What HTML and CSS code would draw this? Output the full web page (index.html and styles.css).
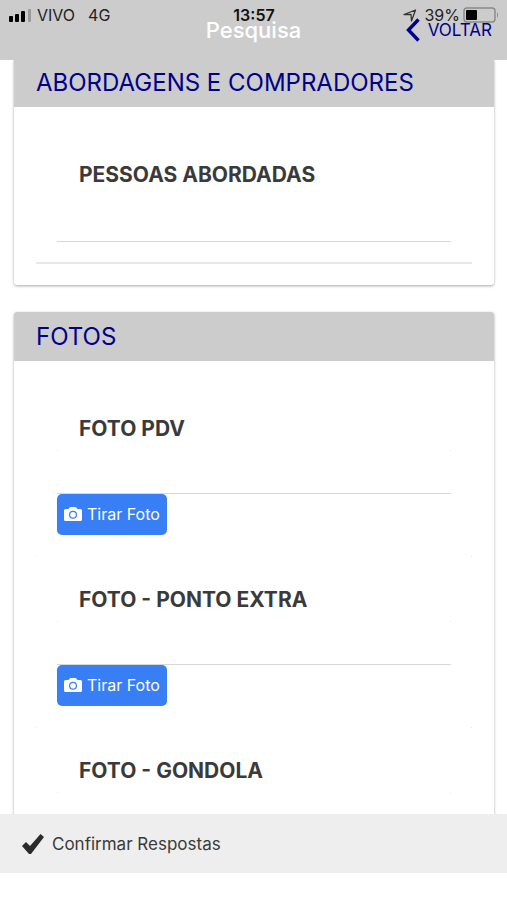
FILE: index.html
```html
<!DOCTYPE html>
<html lang="pt-BR">
<head>
  <meta charset="utf-8">
  <meta name="viewport" content="width=device-width, initial-scale=1">
  <title>Pesquisa</title>
  <link rel="stylesheet" href="styles.css">
</head>
<body>

  <!-- Header, the status bar lies over it -->
  <header class="header">
    <div class="status">
      <div class="status-left">
        <svg class="signal" viewBox="0 0 23 13" aria-hidden="true">
          <rect x="0" y="7" width="4" height="6" rx="1"/>
          <rect x="6" y="5" width="4" height="8" rx="1"/>
          <rect x="12" y="2" width="4" height="11" rx="1"/>
          <rect x="19" y="0" width="3" height="13" rx="1" fill="#999"/>
        </svg>
        <span>VIVO</span>
        <span class="network">4G</span>
      </div>
      <strong class="clock">13:57</strong>
      <div class="status-right">
        <svg class="location" viewBox="0 0 14 13" aria-hidden="true">
          <path d="M1 5.5 L12.5 1 L8.5 12 L8 5.5 Z" fill="none" stroke="#333" stroke-width="1.3" stroke-linejoin="round"/>
        </svg>
        <span class="charge">39%</span>
        <svg class="battery" viewBox="0 0 36 16" aria-hidden="true">
          <rect x="1" y="1" width="31" height="14" rx="3" fill="none" stroke="#888" stroke-width="1.4"/>
          <rect x="3" y="3" width="11" height="10" rx="1"/>
          <path d="M34 5 Q36 8 34 11 Z" fill="#888"/>
        </svg>
      </div>
    </div>
    <h1 class="title">Pesquisa</h1>
    <a class="back" href="#">
      <svg class="back-icon" viewBox="0 0 14 24" aria-hidden="true">
        <path d="M12.5 1.5 L2.5 12 L12.5 22.5" fill="none" stroke="#00008b" stroke-width="3.4"/>
      </svg>
      VOLTAR
    </a>
  </header>

  <main class="content">
    <section class="card">
      <h2 class="card-header">ABORDAGENS E COMPRADORES</h2>
      <div class="card-body">
        <div class="item item-line">
          <label for="pessoas">PESSOAS ABORDADAS</label>
          <input class="field field-tall" type="text" id="pessoas">
        </div>
      </div>
    </section>

    <section class="card">
      <h2 class="card-header">FOTOS</h2>
      <div class="card-body">
        <div class="item item-photo">
          <label for="fotoPdv">FOTO PDV</label>
          <input class="field field-photo" type="text" id="fotoPdv">
          <button class="photo" type="button">
            <svg class="camera" viewBox="0 0 18 14" aria-hidden="true">
              <path fill="#fff" d="M1.5 2H4.5L5.6 .5Q6 0 6.6 0H11.4Q12 0 12.4 .5L13.5 2H16.5Q18 2 18 3.5V12.5Q18 14 16.5 14H1.5Q0 14 0 12.5V3.5Q0 2 1.5 2Z"/>
              <circle cx="9" cy="7.8" r="3.4" fill="none" stroke="#387ef5" stroke-width="1.2"/>
            </svg>
            Tirar Foto
          </button>
        </div>
        <div class="item item-photo">
          <label for="fotoExtra">FOTO - PONTO EXTRA</label>
          <input class="field field-photo" type="text" id="fotoExtra">
          <button class="photo" type="button">
            <svg class="camera" viewBox="0 0 18 14" aria-hidden="true">
              <path fill="#fff" d="M1.5 2H4.5L5.6 .5Q6 0 6.6 0H11.4Q12 0 12.4 .5L13.5 2H16.5Q18 2 18 3.5V12.5Q18 14 16.5 14H1.5Q0 14 0 12.5V3.5Q0 2 1.5 2Z"/>
              <circle cx="9" cy="7.8" r="3.4" fill="none" stroke="#387ef5" stroke-width="1.2"/>
            </svg>
            Tirar Foto
          </button>
        </div>
        <div class="item item-photo">
          <label for="fotoGondola">FOTO - GONDOLA</label>
          <input class="field field-photo" type="text" id="fotoGondola">
        </div>
      </div>
    </section>
  </main>

  <footer class="footer">
    <button class="confirm" type="button">
      <svg class="check" viewBox="0 0 22 20" aria-hidden="true">
        <path d="M0 12 L4 8 L8 12 L18.5 0 L22 3 L9 20 L7 20 Z" fill="#2b2b2b"/>
      </svg>
      Confirmar Respostas
    </button>
  </footer>

</body>
</html>
```
FILE: styles.css
```css
* {
  box-sizing: border-box;
}
body {
  margin: 0;
  height: 100vh;
  padding-bottom: 27px;
  display: flex;
  flex-direction: column;
  font-family: Inter, "Liberation Sans", sans-serif;
  color: #3a3a3a;
  background: #fff;
}
button {
  border: 0;
  font-family: inherit;
  cursor: pointer;
}

/* header */
.header {
  position: relative;
  flex: none;
  display: grid;
  grid-template-columns: 1fr auto 1fr;
  align-items: center;
  height: 60px;
  padding: 0 15px;
  background: #ccc;
}
.status {
  position: absolute;
  top: 5px;
  left: 0;
  right: 0;
  display: grid;
  grid-template-columns: 1fr auto 1fr;
  padding: 0 8px 0 9px;
  font-size: 16px;
  line-height: 20px;
  color: #222;
}
.status-left,
.status-right {
  display: flex;
  align-items: center;
  gap: 5px;
}
.status-right {
  justify-content: flex-end;
  gap: 3px;
}
.signal {
  width: 23px;
  height: 13px;
}
.network {
  margin-left: 8px;
}
.clock {
  font-weight: 600;
  color: #111;
}
.charge {
  margin-left: 4px;
}
.location {
  width: 14px;
  height: 13px;
}
.battery {
  width: 36px;
  height: 16px;
}
.title {
  grid-column: 2;
  margin: 0;
  font-size: 22px;
  line-height: 60px;
  font-weight: 500;
  color: #fff;
}
.back {
  justify-self: end;
  display: flex;
  align-items: center;
  gap: 8px;
  font-size: 17px;
  line-height: 24px;
  color: #00008b;
  text-decoration: none;
}
.back-icon {
  width: 14px;
  height: 24px;
}

/* cards */
.content {
  flex: 1;
  min-height: 0;
  overflow: hidden;
  padding: 0 13px 0 14px;
}
.card {
  margin-bottom: 27px;
  border-radius: 3px;
  box-shadow: 0 1px 3px rgba(0, 0, 0, 0.35);
}
.card-header {
  margin: 0;
  padding: 0 22px;
  border-radius: 3px 3px 0 0;
  font-size: 24px;
  line-height: 49px;
  font-weight: 400;
  color: #00008b;
  background: #ccc;
}
.card:first-child {
  margin-top: -2px;
}
.card-body {
  padding: 25px 22px 21px;
}
.item {
  padding: 21px 21px 22px;
}
.item-line {
  padding-bottom: 20px;
  border-bottom: 2px solid #e8e8e8;
}
.item label {
  display: block;
  padding-left: 22px;
  font-size: 21px;
  line-height: 43px;
  font-weight: 700;
}
.field {
  display: block;
  width: 100%;
  height: 44px;
  padding: 0 22px;
  border: 0;
  border-bottom: 1px solid #d8d8d8;
  border-radius: 0;
  outline: 0;
  font-family: inherit;
  font-size: 21px;
  background: none;
}
.field-tall {
  height: 46px;
}
/* faint ticks at the ends of the edges */
.item-photo {
  background:
    linear-gradient(#e8e8e8, #e8e8e8) left bottom / 1px 1px no-repeat,
    linear-gradient(#e8e8e8, #e8e8e8) right bottom / 1px 1px no-repeat;
}
.field-photo {
  background:
    linear-gradient(#e8e8e8, #e8e8e8) left top / 1px 1px no-repeat,
    linear-gradient(#e8e8e8, #e8e8e8) right top / 1px 1px no-repeat;
}
.photo {
  display: flex;
  align-items: center;
  gap: 5px;
  height: 41px;
  padding: 0 7px 2px;
  border-radius: 5px;
  font-size: 16px;
  color: #fff;
  background: #387ef5;
}
.camera {
  width: 18px;
  height: 14px;
}

/* footer */
.footer {
  flex: none;
  background: #eee;
}
.confirm {
  display: flex;
  align-items: center;
  gap: 8px;
  width: 100%;
  height: 59px;
  padding: 0 22px;
  font-size: 17px;
  color: #3a3a3a;
  background: none;
}
.check {
  width: 22px;
  height: 20px;
}
```
